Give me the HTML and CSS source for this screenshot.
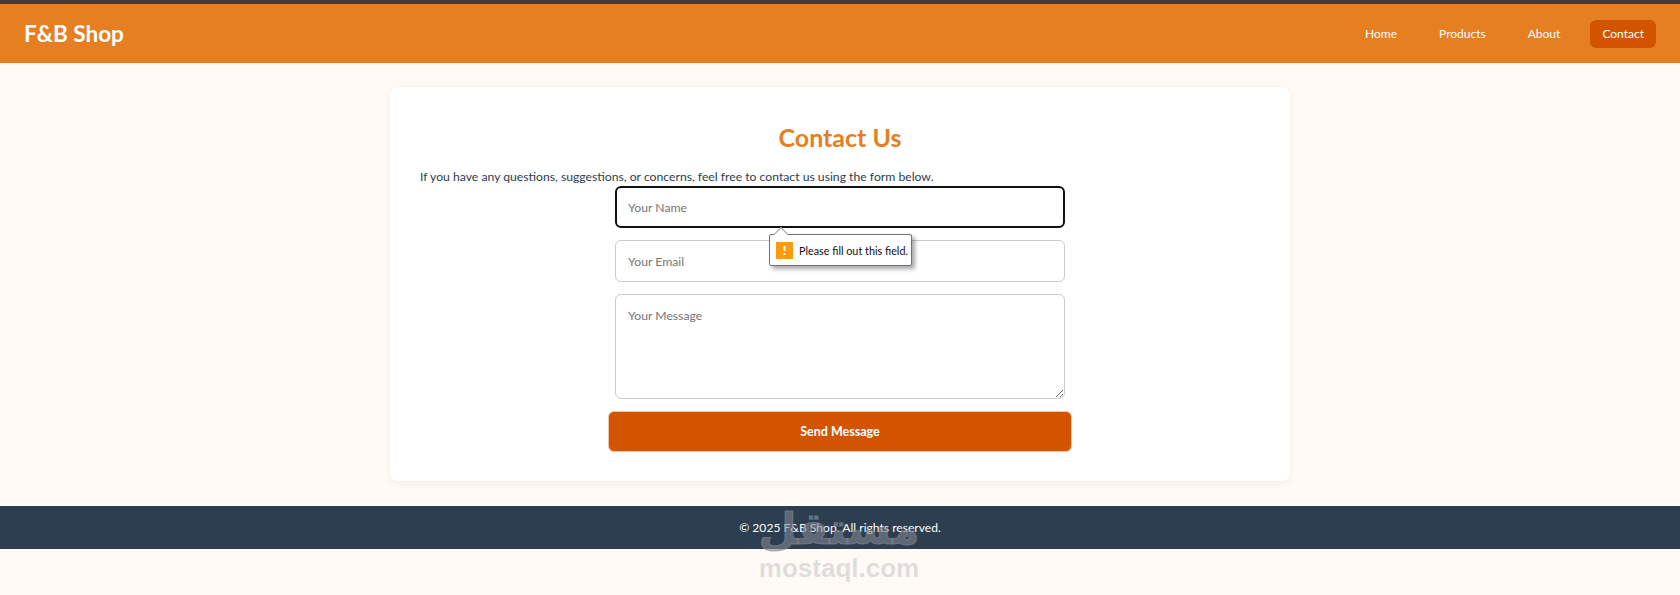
FILE: index.html
```html
<!DOCTYPE html>
<html lang="en">
<head>
  <meta charset="UTF-8" />
  <title>Contact Us - F&amp;B Shop</title>
  <link rel="stylesheet" href="styles.css">
</head>
<body>

  <header>
    <div class="logo">F&amp;B Shop</div>
    <nav>
      <a href="#">Home</a>
      <a href="#">Products</a>
      <a href="#">About</a>
      <a href="#" class="active">Contact</a>
    </nav>
  </header>

  <main class="contact-card">
    <h2>Contact Us</h2>
    <p>If you have any questions, suggestions, or concerns, feel free to contact us using the form below.</p>

    <form class="contact-form">
      <div class="field-wrap">
        <input type="text" class="focused" placeholder="Your Name">
        <!-- Validation bubble -->
        <div class="bubble">
          <span class="bubble-arrow"></span>
          <svg class="bubble-icon" width="17" height="17" viewBox="0 0 17 17">
            <rect width="17" height="17" fill="#ff9a0d"/>
            <rect x="7.5" y="4" width="2" height="5" fill="#fff"/>
            <rect x="7.5" y="11" width="2" height="2" fill="#fff"/>
          </svg>
          <span>Please fill out this field.</span>
        </div>
      </div>
      <input type="email" placeholder="Your Email">
      <textarea placeholder="Your Message"></textarea>
      <button type="button">Send Message</button>
    </form>
  </main>

  <footer>
    © 2025 F&amp;B Shop. All rights reserved.
  </footer>

  <!-- Watermark -->
  <div class="watermark">
    <div class="wm-ar" lang="ar" dir="rtl">مستقل</div>
    <div class="wm-en">mostaql.com</div>
  </div>

</body>
</html>
```

FILE: styles.css
```css
body {
  margin: 0;
  font-family: Lato, "Noto Sans", Arial, sans-serif;
  background-color: #fffaf5;
  color: #2c3e50;
}

header {
  background-color: #e67e22;
  color: white;
  border-top: 4px solid #3d3d3d;
  height: 59px;
  padding: 0 24px;
  display: flex;
  justify-content: space-between;
  align-items: center;
}

header .logo {
  font-size: 22.5px;
  font-weight: bold;
}

nav {
  display: flex;
  gap: 18px;
}

nav a {
  color: white;
  font-size: 12px;
  line-height: 16px;
  text-decoration: none;
  padding: 6px 12px;
  border-radius: 6px;
}

nav a.active {
  background-color: #d35400;
}

.contact-card {
  width: 840px;
  margin: 24px auto 25px;
  padding: 30px;
  height: 334px;
  background-color: white;
  border-radius: 8px;
  box-shadow: 0 2px 8px rgba(120, 90, 50, 0.08);
}

.contact-card h2 {
  margin: 0 0 14px;
  padding-top: 3px;
  text-align: center;
  color: #e67e22;
  font-size: 25px;
  line-height: 34px;
}

.contact-card p {
  margin: 0;
  font-size: 12.2px;
  line-height: 18px;
}

.contact-form {
  display: flex;
  flex-direction: column;
  align-items: center;
  gap: 12px;
}

.field-wrap {
  position: relative;
  width: 450px;
}

input, textarea {
  display: block;
  box-sizing: border-box;
  width: 450px;
  height: 42px;
  padding: 12px;
  border: 1px solid #ccc;
  border-radius: 6px;
  background: white;
  font-family: inherit;
  font-size: 12.2px;
}

input::placeholder, textarea::placeholder {
  color: #757575;
}

textarea {
  height: 105px;
  padding-top: 13px;
}

input.focused {
  border: 2px solid #101010;
  padding: 11px;
}

button {
  width: 464px;
  height: 41px;
  border: 1px solid #f3c79f;
  border-radius: 6px;
  background-color: #d35400;
  color: white;
  font-family: inherit;
  font-size: 12.5px;
  font-weight: 700;
}

.bubble {
  position: absolute;
  left: 154px;
  top: 48px;
  display: flex;
  align-items: center;
  gap: 6px;
  box-sizing: border-box;
  width: 143px;
  height: 32px;
  padding: 0 6px;
  background: white;
  border: 1px solid #6b7280;
  border-radius: 2px;
  box-shadow: 3px 3px 4px rgba(0, 0, 0, 0.35);
  color: #111;
  font-size: 10.8px;
  white-space: nowrap;
}

.bubble-arrow {
  position: absolute;
  left: 6px;
  top: -6px;
  width: 9px;
  height: 9px;
  background: white;
  border-left: 1px solid #9a9fa6;
  border-top: 1px solid #9a9fa6;
  transform: rotate(45deg);
}

.bubble-icon {
  flex: none;
}

footer {
  height: 43px;
  line-height: 43px;
  text-align: center;
  background-color: #2c3e50;
  color: white;
  font-size: 12.1px;
}

.watermark {
  position: absolute;
  left: 739px;
  top: 505px;
  width: 200px;
  text-align: center;
  color: rgba(130, 135, 145, 0.25);
  font-weight: bold;
  font-family: "DejaVu Sans", sans-serif;
  pointer-events: none;
}

.wm-ar {
  font-size: 44px;
  line-height: 48px;
  color: rgba(130, 135, 145, 0.6);
  -webkit-text-stroke: 1px rgba(130, 135, 145, 0.6);
}

.wm-en {
  font-family: "Liberation Sans", Arial, sans-serif;
  font-size: 26px;
  line-height: 30px;
}
```
